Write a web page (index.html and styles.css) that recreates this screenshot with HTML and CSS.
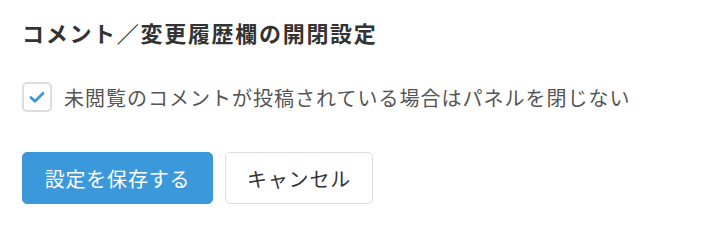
FILE: index.html
```html
<!DOCTYPE html>
<html lang="ja">
<head>
    <meta charset="UTF-8">
    <meta name="viewport" content="width=device-width, initial-scale=1.0">
    <title>コメント／変更履歴欄の開閉設定</title>
    <link rel="stylesheet" href="styles.css">
</head>
<body>
    <div class="settings-panel">
        <h2 class="settings-title">コメント／変更履歴欄の開閉設定</h2>

        <label class="check-row">
            <input type="checkbox" class="check-input" checked>
            <span class="check-box">
                <svg viewBox="0 0 16 16" width="18" height="18">
                    <path d="M2.6 8.4 L6.2 11.8 L13.4 4.6" fill="none" stroke="#3a98db" stroke-width="2.4" stroke-linecap="round" stroke-linejoin="round"/>
                </svg>
            </span>
            <span class="check-label">未閲覧のコメントが投稿されている場合はパネルを閉じない</span>
        </label>

        <div class="button-row">
            <button class="btn btn-primary">設定を保存する</button>
            <button class="btn btn-default">キャンセル</button>
        </div>
    </div>
</body>
</html>
```

FILE: styles.css
```css
:root {
    --text-color: #333333;
    --label-color: #555555;
    --accent-color: #3a98db;
    --border-color: #dddddd;
}

* {
    margin: 0;
    padding: 0;
    box-sizing: border-box;
    font-family: "Noto Sans CJK JP", "Noto Sans", sans-serif;
}

body {
    background-color: #ffffff;
    color: var(--text-color);
}

.settings-panel {
    padding: 16px 22px;
}

.settings-title {
    font-size: 22px;
    font-weight: 700;
    letter-spacing: 1.7px;
    line-height: 32px;
    color: var(--text-color);
}

.check-row {
    display: flex;
    align-items: center;
    margin-top: 34px;
    cursor: pointer;
}

.check-input {
    display: none;
}

.check-box {
    width: 30px;
    height: 30px;
    border: 2px solid var(--border-color);
    border-radius: 5px;
    display: flex;
    align-items: center;
    justify-content: center;
    flex-shrink: 0;
}

.check-label {
    margin-left: 12px;
    font-size: 20px;
    letter-spacing: 1px;
    color: var(--label-color);
}

.button-row {
    display: flex;
    gap: 12px;
    margin-top: 40px;
}

.btn {
    height: 52px;
    border-radius: 5px;
    font-size: 20px;
    letter-spacing: 0.8px;
    cursor: pointer;
}

.btn-primary {
    width: 191px;
    background-color: var(--accent-color);
    border: 1px solid var(--accent-color);
    color: #ffffff;
}

.btn-default {
    width: 148px;
    background-color: #ffffff;
    border: 1px solid var(--border-color);
    color: var(--text-color);
}
```
